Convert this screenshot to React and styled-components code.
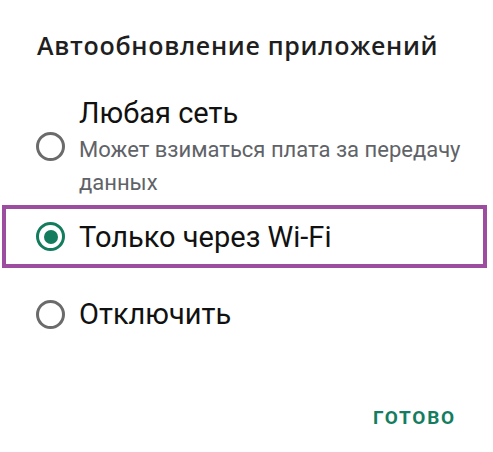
import React, { useState } from 'react';
import styled, { createGlobalStyle } from 'styled-components';

const GlobalStyle = createGlobalStyle`
  html, body {
    margin: 0;
    padding: 0;
    background: #fff;
  }
  body {
    font-family: Roboto, "Noto Sans", "Liberation Sans", sans-serif;
    -webkit-font-smoothing: antialiased;
  }
`;

const options = [
  { id: 'any', label: 'Любая сеть', hint: 'Может взиматься плата за передачу данных', space: 0 },
  { id: 'wifi', label: 'Только через Wi-Fi', space: 6 },
  { id: 'off', label: 'Отключить', space: 22 },
];

export default function App() {
  const [value, setValue] = useState('wifi');

  return (
    <>
      <GlobalStyle />
      <Dialog>
        <Title>Автообновление приложений</Title>

        <List>
          {options.map(opt => (
            <Option
              key={opt.id}
              $highlighted={opt.id === 'wifi'}
              $space={opt.space}
              onClick={() => setValue(opt.id)}
            >
              <Radio $checked={value === opt.id} />
              <Texts>
                <Label>{opt.label}</Label>
                {opt.hint && <Hint>{opt.hint}</Hint>}
              </Texts>
            </Option>
          ))}
        </List>

        <Actions>
          <Button>Готово</Button>
        </Actions>
      </Dialog>
    </>
  );
}

const Dialog = styled.div`
  width: 493px;
  height: 452px;
  box-sizing: border-box;
  padding: 28px 0 0;
  display: flex;
  flex-direction: column;
`;

const Title = styled.h2`
  margin: 0 0 0 37px;
  font-family: "Open Sans", Roboto, sans-serif;
  font-size: 25px;
  font-weight: 600;
  letter-spacing: 0.7px;
  line-height: 34px;
  color: #1f1f1f;
`;

const List = styled.div`
  display: flex;
  flex-direction: column;
  margin-top: 27px;
`;

const Option = styled.div`
  display: flex;
  align-items: center;
  gap: 14px;
  margin: ${p => p.$space}px 6px 0 2px;
  padding: ${p => (p.$highlighted ? '7.5px 0 7.5px 30px' : '4px 0 0 34px')};
  border: ${p => (p.$highlighted ? '4px solid #9c4d9f' : 'none')};
  cursor: pointer;
`;

const Radio = styled.span`
  flex: none;
  box-sizing: border-box;
  width: 29px;
  height: 29px;
  border-radius: 50%;
  border: 3.5px solid ${p => (p.$checked ? '#137c5d' : '#6b6b6b')};
  display: flex;
  align-items: center;
  justify-content: center;

  &::after {
    content: '';
    display: ${p => (p.$checked ? 'block' : 'none')};
    width: 14px;
    height: 14px;
    border-radius: 50%;
    background: #137c5d;
  }
`;

const Texts = styled.div`
  display: flex;
  flex-direction: column;
`;

const Label = styled.div`
  font-size: 29px;
  line-height: 40px;
  color: #111;
`;

const Hint = styled.div`
  font-size: 22px;
  line-height: 33px;
  color: #5f6368;
  max-width: 400px;
`;

const Actions = styled.div`
  margin-top: auto;
  display: flex;
  justify-content: flex-end;
  padding: 0 37px 19px 0;
`;

const Button = styled.button`
  border: none;
  background: none;
  padding: 4px 0;
  font-family: inherit;
  font-size: 19px;
  font-weight: 700;
  letter-spacing: 1.8px;
  text-transform: uppercase;
  color: #147d5f;
  cursor: pointer;
`;
